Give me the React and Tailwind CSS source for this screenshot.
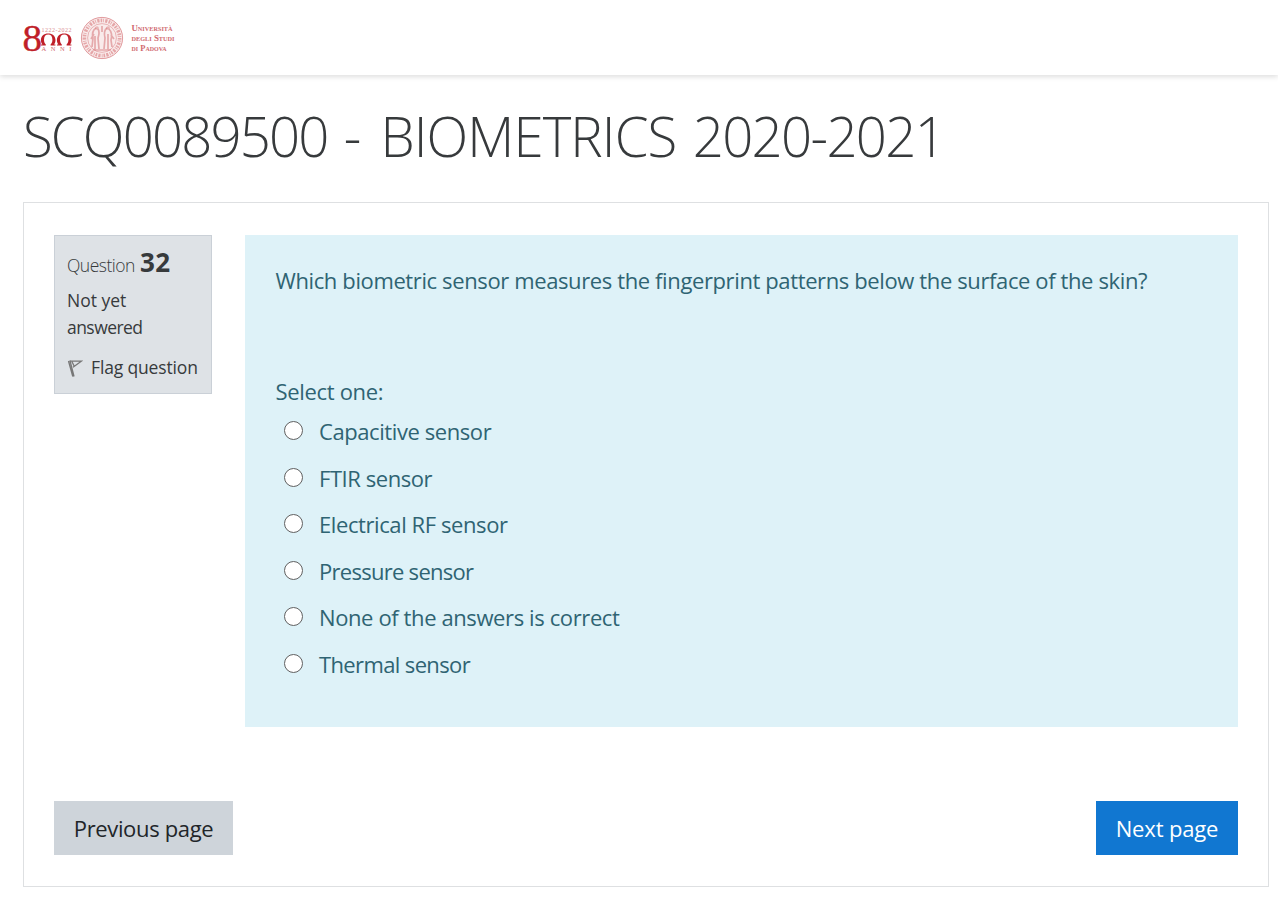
import React from 'react';

const answers = [
  { label: 'Capacitive sensor', tracking: 'tracking-[-0.42px]', row: 'h-[47px]' },
  { label: 'FTIR sensor', tracking: 'tracking-[-0.44px]', row: 'h-[46px]' },
  { label: 'Electrical RF sensor', tracking: 'tracking-[-0.41px]', row: 'h-[47px]' },
  { label: 'Pressure sensor', tracking: 'tracking-[-0.72px]', row: 'h-[46px]' },
  { label: 'None of the answers is correct', tracking: 'tracking-[-0.39px]', row: 'h-[47px]' },
  { label: 'Thermal sensor', tracking: 'tracking-[-0.63px]', row: 'h-[46px]' },
];

function Seal() {
  return (
    <svg className="ml-[7px] h-[44px] w-[44px] shrink-0" viewBox="0 0 44 44" fill="none" stroke="#c4373d">
      <circle cx="22" cy="22" r="21" fill="#c4373d" stroke="none" opacity=".1" />
      <circle cx="22" cy="22" r="20.6" strokeWidth="1" opacity=".45" />
      <circle cx="22" cy="22" r="17.6" strokeWidth="3.6" strokeDasharray="1.6 1 .8 1.3 2.200 1.2" opacity=".38" />
      <circle cx="22" cy="22" r="14.4" strokeWidth=".9" opacity=".35" />
      <g opacity=".36" strokeWidth="1.7">
        <path d="M16 12c-3 2-4 6-3 10l-1 9M18 13c2 3 1 6 0 9l1 11M14 18l-3 5M15 20v14" />
        <path d="M27 12c-3 2-3 6-2 10l-1 11M29 13c3 3 3 7 2 11l1 7M28 18v16M31 19l3 4" />
        <path d="M22 10v6M13 34h18" />
      </g>
      <circle cx="17" cy="12" r="1.8" fill="#c4373d" stroke="none" opacity=".3" />
      <circle cx="28" cy="12" r="1.8" fill="#c4373d" stroke="none" opacity=".3" />
    </svg>
  );
}

function Logo() {
  return (
    <div className="flex items-center">
      <svg className="h-[44px] w-[50px] shrink-0 overflow-visible" viewBox="0 -6 50 44" fill="#c01f29">
        <text x="-0.500" y="29" fontSize="38" textLength="19.500" lengthAdjust="spacingAndGlyphs" fontFamily="Liberation Serif, serif" stroke="#c01f29" strokeWidth=".4">8</text>
        <path id="arch" d="M18 23.400v-.9h1.400c-1-1.200-1.500-2.700-1.500-4.500 0-4 2.900-6.600 7.300-6.600s7.300 2.600 7.300 6.600c0 1.800-.5 3.300-1.500 4.500h1.400v.9h-4.800v-.9c1.200-1 1.800-2.600 1.800-4.700 0-3.600-1.500-5.400-4.200-5.400s-4.200 1.800-4.200 5.400c0 2.100.6 3.700 1.800 4.700v.9z" />
        <use href="#arch" x="16" />
        <text x="18.500" y="9.500" fontSize="6" textLength="30" fill="#d98a8e" fontFamily="Liberation Serif, serif">1222-2022</text>
        <text x="18.500" y="29.200" fontSize="6.500" textLength="30" fill="#cf6a70" fontFamily="Liberation Serif, serif">ANNI</text>
      </svg>
      <Seal />
      <svg className="ml-[8px] h-[32px] w-[44px] shrink-0 overflow-visible" viewBox="0 0.5 44 32" fill="#d0696f" fontFamily="Liberation Serif, serif" fontWeight="700" fontSize="8.500" style={{ fontVariantCaps: 'small-caps' }}>
        <text x="-0.500" y="9.500" textLength="41" lengthAdjust="spacingAndGlyphs">Università</text>
        <text x="-0.500" y="19.300" textLength="43" lengthAdjust="spacingAndGlyphs">degli Studi</text>
        <text x="-0.500" y="29.100" textLength="35" lengthAdjust="spacingAndGlyphs">di Padova</text>
      </svg>
    </div>
  );
}

function FlagIcon() {
  return (
    <svg className="h-[18px] w-[16px] shrink-0" viewBox="0 0 16 18" fill="none" stroke="#777" strokeWidth="1.300">
      <path d="M1.500 2 5.800 17.500M3 1.700 7 17.500" />
      <path d="M2.700 2.200h11.600L6 8.200M5 2.700l2 4" />
    </svg>
  );
}

export default function App() {
  return (
    <div className="h-[907px] w-[1278px] overflow-hidden bg-white font-['Open_Sans','Noto_Sans',sans-serif] text-[#373a3c]">
      <header className="flex h-[75px] items-center bg-white pl-[23px] shadow-[0_2px_5px_rgba(0,0,0,0.13)]">
        <Logo />
      </header>
      <h1 className="ml-[23px] mt-[26px] h-[70px] whitespace-nowrap text-[54.500px] font-light leading-[70px] text-[#373a3c]">
        <span className="tracking-[-1.850px]">SCQ0089500 </span>
        <span className="ml-[4px] tracking-[-1px]">- </span>
        <span className="ml-[7px] tracking-[-0.9px]">BIOMETRICS </span>
        <span className="ml-[3px] tracking-[-1.650px]">2020-2021</span>
      </h1>
      <main className="ml-[23px] mt-[31px] h-[685px] w-[1246px] border border-[#dee0e2] px-[30px] pt-[32px]">
        <div className="flex items-start gap-[33px]">
          <aside className="h-[159px] w-[158px] border border-[#cad0d7] bg-[#dee2e6] pl-[12px] text-[17.500px]">
            <h2 className="flex h-[44px] items-baseline gap-[5px] whitespace-nowrap pt-[8px] leading-[36px]">
              <span className="font-light tracking-[-0.5px]">Question</span>
              <strong className="text-[26px] font-bold tracking-[0.6px]">32</strong>
            </h2>
            <div className="pt-[7px] leading-[27px]">
              <div><span>Not yet</span></div>
              <div><span className="tracking-[-0.55px]">answered</span></div>
            </div>
            <div className="mt-[13px] flex h-[27px] items-center gap-[8px] whitespace-nowrap leading-[27px]">
              <FlagIcon />
              <span className="tracking-[-0.15px]">Flag question</span>
            </div>
          </aside>
          <section className="h-[492px] w-[993px] whitespace-nowrap bg-[#def2f8] pl-[30px] pt-[28px] text-[22px] leading-[34px] text-[#2f6473]">
            <p className="pl-[0.5px]"><span className="tracking-[-0.382px]">Which biometric sensor measures the fingerprint patterns below the surface of the skin?</span></p>
            <p className="mt-[77px] pl-[0.5px]"><span className="tracking-[-0.32px]">Select one:</span></p>
            <div className="mt-[6px] pl-[9px]">
              {answers.map((a) => (
                <label key={a.label} className={`flex items-start ${a.row}`}>
                  <input type="radio" name="answer" className="mt-[7px] h-[19px] w-[19px] shrink-0 appearance-none rounded-full border border-[#606060] bg-white" />
                  <span className={`ml-[16px] ${a.tracking}`}>{a.label}</span>
                </label>
              ))}
            </div>
          </section>
        </div>
        <div className="mt-[74px] flex justify-between whitespace-nowrap text-[22px] leading-[54px]">
          <button className="h-[54px] w-[179px] bg-[#ced4da] text-[#212529]"><span className="tracking-[-0.35px]">Previous page</span></button>
          <button className="h-[54px] w-[142px] bg-[#1177d1] text-white"><span className="tracking-[-0.15px]">Next page</span></button>
        </div>
      </main>
    </div>
  );
}
